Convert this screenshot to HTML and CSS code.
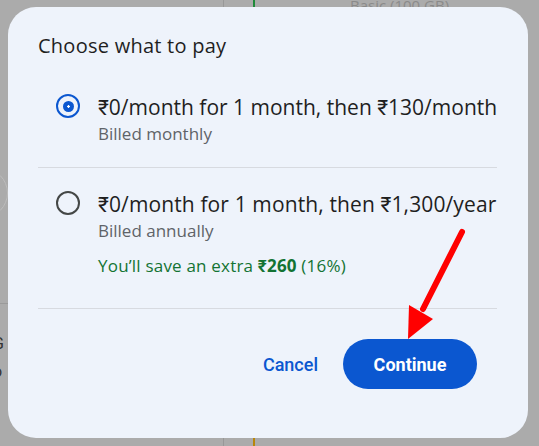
FILE: index.html
```html
<!DOCTYPE html>
<html>
<head>
  <title>Choose what to pay</title>
  <link rel="stylesheet" href="styles.css">
</head>
<body>
  <div class="backdrop">
    <div class="bg-rule"></div>
    <div class="bg-accent bg-accent-top"></div>
    <div class="bg-accent bg-accent-bottom"></div>
    <div class="bg-heading">Basic (100 GB)</div>
    <div class="bg-circle"></div>
    <div class="bg-line"></div>
    <div class="bg-text">G<br>o</div>
  </div>

  <div class="dialog">
    <h2 class="title">Choose what to pay</h2>

    <div class="option">
      <span class="radio checked"><span class="radio-dot"></span></span>
      <div class="option-text">
        <div class="price">₹0/month for 1 month, then ₹130/month</div>
        <div class="billed">Billed monthly</div>
      </div>
    </div>

    <div class="divider"></div>

    <div class="option option-last">
      <span class="radio"></span>
      <div class="option-text">
        <div class="price price-wide">₹0/month for 1 month, then ₹1,300/year</div>
        <div class="billed">Billed annually</div>
        <div class="savings">You’ll save an extra <b>₹260</b> (16%)</div>
      </div>
    </div>

    <div class="divider"></div>

    <div class="actions">
      <button class="btn-cancel">Cancel</button>
      <button class="btn-continue">Continue</button>
    </div>
  </div>

  <svg class="arrow" width="539" height="446" viewBox="0 0 539 446">
    <line x1="462" y1="232" x2="423" y2="309" stroke="#ff0000" stroke-width="6" stroke-linecap="round"/>
    <polygon points="408,339 409,305 433,319" fill="#ff0000"/>
  </svg>
</body>
</html>
```

FILE: styles.css
```css
body {
  margin: 0;
  padding: 0;
  width: 539px;
  height: 446px;
  overflow: hidden;
  background-color: #ababab;
  font-family: "Open Sans", Roboto, Arial, sans-serif;
  position: relative;
}

/* page behind the scrim */
.backdrop {
  position: absolute;
  top: 0;
  left: 0;
  width: 539px;
  height: 446px;
}

.bg-rule {
  position: absolute;
  left: 223px;
  top: 0;
  width: 1px;
  height: 446px;
  background-color: #989898;
}

.bg-accent {
  position: absolute;
  left: 253px;
  width: 2px;
  height: 10px;
}

.bg-accent-top {
  top: 0;
  background-color: #1e8a3a;
}

.bg-accent-bottom {
  bottom: 0;
  background-color: #b8860b;
}

.bg-heading {
  position: absolute;
  left: 350px;
  top: 0;
  font-size: 15px;
  line-height: 10px;
  height: 7px;
  overflow: hidden;
  color: #8a8a8a;
}

.bg-circle {
  position: absolute;
  left: -42px;
  top: 168px;
  width: 48px;
  height: 48px;
  border: 1px solid #bcbcbc;
  border-radius: 50%;
}

.bg-line {
  position: absolute;
  left: 0;
  top: 303px;
  width: 8px;
  height: 1px;
  background-color: #9a9a9a;
}

.bg-text {
  position: absolute;
  left: -7px;
  top: 330px;
  font-family: Roboto, Arial, sans-serif;
  font-size: 16px;
  line-height: 28px;
  color: #333;
}

/* dialog */
.dialog {
  position: relative;
  margin: 7px 0 0 8px;
  width: 520px;
  height: 431px;
  box-sizing: border-box;
  padding: 27px 31px 0 30px;
  background-color: #eef3fb;
  border-radius: 28px;
}

.title {
  margin: 0 0 13px 0;
  font-size: 20px;
  line-height: 24px;
  letter-spacing: 0.25px;
  font-weight: 400;
  color: #1f1f1f;
}

.option {
  display: flex;
  align-items: flex-start;
  padding: 22px 0;
}

.option-last {
  padding-bottom: 31px;
}

.radio {
  flex: none;
  width: 24px;
  height: 24px;
  box-sizing: border-box;
  margin: 1px 18px 0 18px;
  border: 2.5px solid #444746;
  border-radius: 50%;
  display: flex;
  align-items: center;
  justify-content: center;
}

.radio.checked {
  border-color: #0b57d0;
}

.radio-dot {
  width: 11px;
  height: 11px;
  border-radius: 50%;
  background: radial-gradient(circle, #ffffff 0 1px, #0b57d0 1.5px);
}

.price {
  font-size: 21px;
  line-height: 28px;
  color: #1f1f1f;
  white-space: nowrap;
}

.price-wide {
  letter-spacing: 0.12px;
}

.billed {
  margin-top: 2px;
  font-size: 17px;
  line-height: 22px;
  color: #5f6368;
}

.savings {
  margin-top: 13px;
  font-size: 17px;
  line-height: 22px;
  letter-spacing: 0.2px;
  color: #137333;
}

.savings b {
  font-weight: 700;
}

.divider {
  height: 1px;
  background-color: #d7dae0;
}

.actions {
  display: flex;
  justify-content: flex-end;
  align-items: center;
  margin-top: 30px;
  padding-right: 20px;
}

.btn-cancel {
  border: none;
  background: none;
  padding: 0 12px;
  margin-right: 13px;
  height: 50px;
  font-family: Roboto, Arial, sans-serif;
  font-size: 18px;
  font-weight: 500;
  color: #0b57d0;
  cursor: pointer;
}

.btn-continue {
  border: none;
  width: 134px;
  height: 50px;
  border-radius: 25px;
  background-color: #0b57d0;
  font-family: Roboto, Arial, sans-serif;
  font-size: 18px;
  font-weight: 700;
  color: #ffffff;
  cursor: pointer;
}

/* annotation drawn over the screenshot */
.arrow {
  position: absolute;
  top: 0;
  left: 0;
}
```
